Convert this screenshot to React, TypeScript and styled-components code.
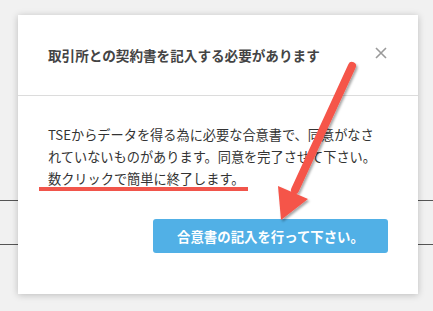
import React from "react";
import styled, { createGlobalStyle } from "styled-components";

const Global = createGlobalStyle`
  html, body { margin: 0; padding: 0; background: #f1f1f1; }
  body { font-family: "Noto Sans CJK JP", "Noto Sans", sans-serif; }
  #root { width: 433px; height: 311px; overflow: hidden; }
`;

const Page = styled.div`
  position: relative;
  width: 433px;
  height: 311px;
  background: #f1f1f1;
  display: flex;
  flex-direction: column;
  padding-top: 200px;
  box-sizing: border-box;
`;

const Rule = styled.div<{ $gap: number }>`
  height: 1px;
  background: #555;
  margin-bottom: ${(p) => p.$gap}px;
`;

const Modal = styled.div`
  position: absolute;
  left: 18px;
  top: 15px;
  width: 400px;
  height: 279px;
  background: #fff;
  box-shadow: 0 1px 7px rgba(0, 0, 0, 0.22);
  display: flex;
  flex-direction: column;
`;

const Header = styled.div`
  height: 81px;
  border-bottom: 1px solid #dcdcdc;
  display: flex;
  align-items: center;
  justify-content: space-between;
  padding: 0 31px 0 30px;
  box-sizing: border-box;
`;

const Title = styled.h2`
  margin: 0;
  font-size: 13.6px;
  font-weight: 700;
  color: #444;
  letter-spacing: 0;
`;

const Close = styled.button`
  border: 0;
  background: none;
  padding: 0;
  margin-bottom: 4px;
  width: 12px;
  height: 12px;
  display: flex;
  align-items: center;
  justify-content: center;
  cursor: pointer;
`;

const Body = styled.div`
  padding: 28px 30px 0 30px;
  display: flex;
  flex-direction: column;
`;

const Text = styled.p`
  margin: 0;
  font-size: 13.2px;
  line-height: 22px;
  color: #333;
  white-space: nowrap;
`;

const Actions = styled.div`
  display: flex;
  justify-content: flex-end;
  padding: 29px 30px 0 0;
`;

const Primary = styled.button`
  width: 235px;
  height: 34px;
  border: 0;
  border-radius: 3px;
  background: #51b0e6;
  color: #fff;
  font-family: "Noto Sans CJK JP", sans-serif;
  font-size: 13.4px;
  font-weight: 700;
  cursor: pointer;
`;

const Underline = styled.div`
  position: absolute;
  left: 39px;
  top: 187px;
  width: 209px;
  height: 4px;
  background: #f1554b;
`;

const ArrowLayer = styled.svg`
  position: absolute;
  left: 0;
  top: 0;
  pointer-events: none;
`;

export default function App() {
  return (
    <>
      <Global />
      <Page>
        <Rule $gap={43} />
        <Rule $gap={0} />
        <Modal>
          <Header>
            <Title>取引所との契約書を記入する必要があります</Title>
            <Close aria-label="close">
              <svg width="12" height="12" viewBox="0 0 12 12">
                <path d="M1 1L11 11M11 1L1 11" stroke="#9a9a9a" strokeWidth="1.6" />
              </svg>
            </Close>
          </Header>
          <Body>
            <Text>
              TSEからデータを得る為に必要な合意書で、同意がなさ
              <br />
              れていないものがあります。同意を完了させて下さい。
              <br />
              数クリックで簡単に終了します。
            </Text>
          </Body>
          <Actions>
            <Primary>合意書の記入を行って下さい。</Primary>
          </Actions>
        </Modal>
        <Underline />
        <ArrowLayer width="433" height="311" viewBox="0 0 433 311">
          <defs>
            <filter id="sh" x="-20%" y="-20%" width="140%" height="140%">
              <feDropShadow dx="1.5" dy="2" stdDeviation="1.2" floodColor="#000" floodOpacity="0.35" />
            </filter>
          </defs>
          <g filter="url(#sh)" fill="#f5544a" stroke="none">
            <line x1="352" y1="66" x2="295" y2="190" stroke="#f5544a" strokeWidth="8" strokeLinecap="round" />
            <polygon points="278,186 308,199 281,220" />
          </g>
        </ArrowLayer>
      </Page>
    </>
  );
}
